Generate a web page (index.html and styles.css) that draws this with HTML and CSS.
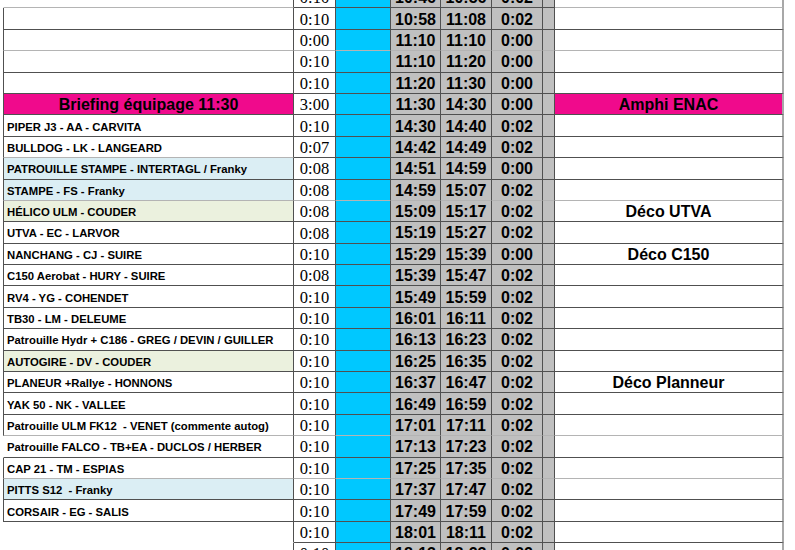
FILE: index.html
```html
<!DOCTYPE html>
<html lang="fr">
<head>
<meta charset="utf-8">
<title>Programme</title>
<link rel="stylesheet" href="styles.css">
</head>
<body>
<div class="sheet">
  <div class="row lt-edge"><div class="c name nl"></div><div class="c dur">0:10</div><div class="c blue"></div><div class="c t">10:46</div><div class="c t">10:56</div><div class="c t">0:02</div><div class="c gap"></div><div class="c note"></div></div>
  <div class="row"><div class="c name"></div><div class="c dur">0:10</div><div class="c blue"></div><div class="c t">10:58</div><div class="c t">11:08</div><div class="c t">0:02</div><div class="c gap"></div><div class="c note"></div></div>
  <div class="row light"><div class="c name"></div><div class="c dur">0:00</div><div class="c blue"></div><div class="c t">11:10</div><div class="c t">11:10</div><div class="c t">0:00</div><div class="c gap"></div><div class="c note"></div></div>
  <div class="row"><div class="c name"></div><div class="c dur">0:10</div><div class="c blue"></div><div class="c t">11:10</div><div class="c t">11:20</div><div class="c t">0:00</div><div class="c gap"></div><div class="c note"></div></div>
  <div class="row"><div class="c name"></div><div class="c dur">0:10</div><div class="c blue"></div><div class="c t">11:20</div><div class="c t">11:30</div><div class="c t">0:00</div><div class="c gap"></div><div class="c note"></div></div>
  <div class="row"><div class="c name pink">Briefing équipage 11:30</div><div class="c dur">3:00</div><div class="c blue"></div><div class="c t">11:30</div><div class="c t">14:30</div><div class="c t">0:00</div><div class="c gap"></div><div class="c note pink">Amphi ENAC</div></div>
  <div class="row"><div class="c name">PIPER J3 - AA - CARVITA</div><div class="c dur">0:10</div><div class="c blue"></div><div class="c t">14:30</div><div class="c t">14:40</div><div class="c t">0:02</div><div class="c gap"></div><div class="c note"></div></div>
  <div class="row light-name"><div class="c name">BULLDOG - LK - LANGEARD</div><div class="c dur">0:07</div><div class="c blue"></div><div class="c t">14:42</div><div class="c t">14:49</div><div class="c t">0:02</div><div class="c gap"></div><div class="c note"></div></div>
  <div class="row"><div class="c name sky">PATROUILLE STAMPE - INTERTAGL / Franky</div><div class="c dur">0:08</div><div class="c blue"></div><div class="c t">14:51</div><div class="c t">14:59</div><div class="c t">0:00</div><div class="c gap"></div><div class="c note"></div></div>
  <div class="row light"><div class="c name sky">STAMPE - FS - Franky</div><div class="c dur">0:08</div><div class="c blue"></div><div class="c t">14:59</div><div class="c t">15:07</div><div class="c t">0:02</div><div class="c gap"></div><div class="c note"></div></div>
  <div class="row"><div class="c name sage">HÉLICO ULM - COUDER</div><div class="c dur">0:08</div><div class="c blue"></div><div class="c t">15:09</div><div class="c t">15:17</div><div class="c t">0:02</div><div class="c gap"></div><div class="c note">Déco UTVA</div></div>
  <div class="row"><div class="c name">UTVA - EC - LARVOR</div><div class="c dur">0:08</div><div class="c blue"></div><div class="c t">15:19</div><div class="c t">15:27</div><div class="c t">0:02</div><div class="c gap"></div><div class="c note"></div></div>
  <div class="row"><div class="c name">NANCHANG - CJ - SUIRE</div><div class="c dur">0:10</div><div class="c blue"></div><div class="c t">15:29</div><div class="c t">15:39</div><div class="c t">0:00</div><div class="c gap"></div><div class="c note">Déco C150</div></div>
  <div class="row"><div class="c name">C150 Aerobat - HURY - SUIRE</div><div class="c dur">0:08</div><div class="c blue"></div><div class="c t">15:39</div><div class="c t">15:47</div><div class="c t">0:02</div><div class="c gap"></div><div class="c note"></div></div>
  <div class="row"><div class="c name">RV4 - YG - COHENDET</div><div class="c dur">0:10</div><div class="c blue"></div><div class="c t">15:49</div><div class="c t">15:59</div><div class="c t">0:02</div><div class="c gap"></div><div class="c note"></div></div>
  <div class="row"><div class="c name">TB30 - LM - DELEUME</div><div class="c dur">0:10</div><div class="c blue"></div><div class="c t">16:01</div><div class="c t">16:11</div><div class="c t">0:02</div><div class="c gap"></div><div class="c note"></div></div>
  <div class="row"><div class="c name">Patrouille Hydr + C186 - GREG / DEVIN / GUILLER</div><div class="c dur">0:10</div><div class="c blue"></div><div class="c t">16:13</div><div class="c t">16:23</div><div class="c t">0:02</div><div class="c gap"></div><div class="c note"></div></div>
  <div class="row"><div class="c name sage">AUTOGIRE - DV - COUDER</div><div class="c dur">0:10</div><div class="c blue"></div><div class="c t">16:25</div><div class="c t">16:35</div><div class="c t">0:02</div><div class="c gap"></div><div class="c note"></div></div>
  <div class="row"><div class="c name">PLANEUR +Rallye - HONNONS</div><div class="c dur">0:10</div><div class="c blue"></div><div class="c t">16:37</div><div class="c t">16:47</div><div class="c t">0:02</div><div class="c gap"></div><div class="c note">Déco Planneur</div></div>
  <div class="row"><div class="c name">YAK 50 - NK - VALLEE</div><div class="c dur">0:10</div><div class="c blue"></div><div class="c t">16:49</div><div class="c t">16:59</div><div class="c t">0:02</div><div class="c gap"></div><div class="c note"></div></div>
  <div class="row light"><div class="c name">Patrouille ULM FK12  - VENET (commente autog)</div><div class="c dur">0:10</div><div class="c blue"></div><div class="c t">17:01</div><div class="c t">17:11</div><div class="c t">0:02</div><div class="c gap"></div><div class="c note"></div></div>
  <div class="row"><div class="c name nl">Patrouille FALCO - TB+EA - DUCLOS / HERBER</div><div class="c dur">0:10</div><div class="c blue"></div><div class="c t">17:13</div><div class="c t">17:23</div><div class="c t">0:02</div><div class="c gap"></div><div class="c note"></div></div>
  <div class="row light"><div class="c name">CAP 21 - TM - ESPIAS</div><div class="c dur">0:10</div><div class="c blue"></div><div class="c t">17:25</div><div class="c t">17:35</div><div class="c t">0:02</div><div class="c gap"></div><div class="c note"></div></div>
  <div class="row"><div class="c name sky">PITTS S12  - Franky</div><div class="c dur">0:10</div><div class="c blue"></div><div class="c t">17:37</div><div class="c t">17:47</div><div class="c t">0:02</div><div class="c gap"></div><div class="c note"></div></div>
  <div class="row"><div class="c name">CORSAIR - EG - SALIS</div><div class="c dur">0:10</div><div class="c blue"></div><div class="c t">17:49</div><div class="c t">17:59</div><div class="c t">0:02</div><div class="c gap"></div><div class="c note"></div></div>
  <div class="row"><div class="c name nb"></div><div class="c dur">0:10</div><div class="c blue"></div><div class="c t">18:01</div><div class="c t">18:11</div><div class="c t">0:02</div><div class="c gap"></div><div class="c note"></div></div>
  <div class="row"><div class="c name nb"></div><div class="c dur">0:10</div><div class="c blue"></div><div class="c t">18:13</div><div class="c t">18:23</div><div class="c t">0:02</div><div class="c gap"></div><div class="c note"></div></div>
</div>
</body>
</html>
```

FILE: styles.css
```css
html, body {
  margin: 0;
  padding: 0;
  background: #ffffff;
  overflow: hidden;
  height: 550px;
}

.sheet {
  display: flex;
  flex-direction: column;
  margin-top: -13px;
  padding-left: 3px;
  color: #000;
}

.row {
  display: grid;
  grid-template-columns: 291px 42px 55px 50px 51px 51px 12px 229px;
  height: 21.4px;
  flex: none;
}

.c {
  box-sizing: border-box;
  display: flex;
  align-items: center;
  justify-content: center;
  padding-top: 2px;
  border-right: 1px solid #505050;
  border-bottom: 1px solid #505050;
  white-space: pre;
  overflow: hidden;
  font-family: "Liberation Sans", Arial, sans-serif;
  font-weight: bold;
  font-size: 16px;
}

.name {
  justify-content: flex-start;
  padding-left: 3px;
  border-left: 1px solid #505050;
  font-size: 11.3px;
}

.name.nl {
  border-left-color: transparent;
}

.name.nb {
  border-left-color: transparent;
  border-bottom-color: transparent;
}

.name.pink {
  justify-content: center;
  font-size: 16px;
  padding-left: 0;
}

.pink {
  background: #f00a8c;
}

.sky {
  background: #dbeef4;
}

.sage {
  background: #ebf1de;
}

.dur {
  font-family: "Liberation Serif", "Times New Roman", serif;
  font-weight: normal;
  font-size: 16.5px;
  background: #ffffff;
}

.blue {
  background: #00c8ff;
}

.t, .gap {
  background: #c0c0c0;
}

.note {
  border-right: 2px solid #a8a8a8;
}

.row.light > .c {
  border-bottom-color: #b4b4b4;
}

.row.light-name > .name {
  border-bottom-color: #b4b4b4;
}

.row.lt-edge > .name,
.row.lt-edge > .note {
  border-bottom-color: #b4b4b4;
}
```
